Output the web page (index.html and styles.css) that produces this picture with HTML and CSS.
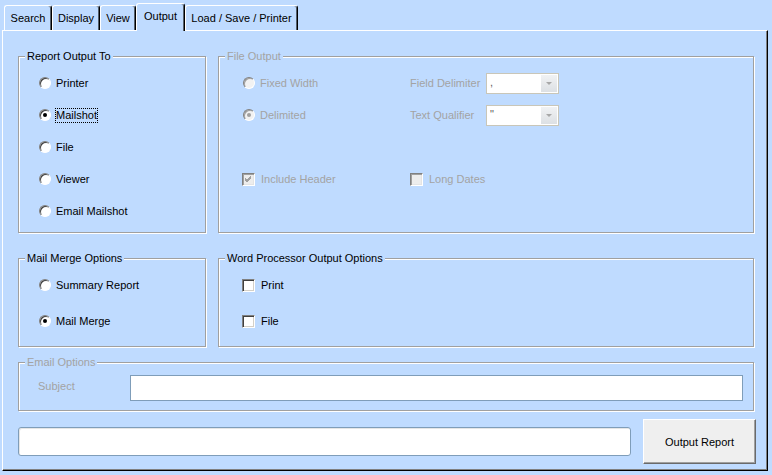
FILE: index.html
```html
<!DOCTYPE html>
<html>
<head>
<meta charset="utf-8">
<link rel="stylesheet" href="styles.css">
</head>
<body>
<div class="tabs">
  <div class="tab t-search">Search</div>
  <div class="tab t-display">Display</div>
  <div class="tab t-view">View</div>
  <div class="tab t-output active">Output</div>
  <div class="tab t-load">Load / Save / Printer</div>
</div>
<div class="panel">
  <div class="row row1">
    <fieldset class="group narrow">
      <legend>Report Output To</legend>
      <div class="opts report">
        <div class="opt"><span class="radio"></span><span class="lbl">Printer</span></div>
        <div class="opt"><span class="radio on"></span><span class="lbl focus">Mailshot</span></div>
        <div class="opt"><span class="radio"></span><span class="lbl">File</span></div>
        <div class="opt"><span class="radio"></span><span class="lbl">Viewer</span></div>
        <div class="opt"><span class="radio"></span><span class="lbl">Email Mailshot</span></div>
      </div>
    </fieldset>
    <fieldset class="group wide disabled">
      <legend>File Output</legend>
      <div class="fgrid">
        <div class="opt"><span class="radio dis"></span><span class="lbl">Fixed Width</span></div>
        <div class="opt"><span class="flabel">Field Delimiter</span><div class="combo"><span class="val">,</span><span class="cbtn"><span class="arrow"></span></span></div></div>
        <div class="opt"><span class="radio dis on"></span><span class="lbl">Delimited</span></div>
        <div class="opt"><span class="flabel">Text Qualifier</span><div class="combo"><span class="val">"</span><span class="cbtn"><span class="arrow"></span></span></div></div>
        <div class="opt"></div>
        <div class="opt"></div>
        <div class="opt"><span class="check dis shift"><svg width="11" height="11" viewBox="0 0 11 11"><path d="M2 5 L4 7 L8 3 M2 6 L4 8 L8 4 M2 4 L4 6 L8 2" stroke="#A0A0A0" stroke-width="1" fill="none"/></svg></span><span class="lbl">Include Header</span></div>
        <div class="opt"><span class="check dis"></span><span class="lbl">Long Dates</span></div>
      </div>
    </fieldset>
  </div>
  <div class="row row2">
    <fieldset class="group narrow">
      <legend>Mail Merge Options</legend>
      <div class="opts tall mm">
        <div class="opt"><span class="radio"></span><span class="lbl">Summary Report</span></div>
        <div class="opt"><span class="radio on"></span><span class="lbl">Mail Merge</span></div>
      </div>
    </fieldset>
    <fieldset class="group wide">
      <legend>Word Processor Output Options</legend>
      <div class="opts tall wp">
        <div class="opt"><span class="check"></span><span class="lbl">Print</span></div>
        <div class="opt"><span class="check"></span><span class="lbl">File</span></div>
      </div>
    </fieldset>
  </div>
  <div class="row row3">
    <fieldset class="group full disabled">
      <legend>Email Options</legend>
      <div class="subject-row">
        <span class="sublabel">Subject</span>
        <div class="input"></div>
      </div>
    </fieldset>
  </div>
  <div class="row row4">
    <div class="status"></div>
    <button class="go">Output Report</button>
  </div>
</div>
</body>
</html>
```
FILE: styles.css
```css
html, body {
  margin: 0;
  padding: 0;
}
body {
  background: #BFDBFF;
  font-family: "Liberation Sans", Arial, sans-serif;
  font-size: 11px;
  line-height: 13px;
  color: #000;
  width: 772px;
  height: 475px;
  overflow: hidden;
}

/* Tabs */
.tabs {
  display: flex;
  align-items: flex-end;
  height: 30px;
  padding-left: 4px;
  box-sizing: border-box;
}
.tab {
  box-sizing: border-box;
  height: 25px;
  border-top: 1px solid #fff;
  border-left: 1px solid #fff;
  border-right: 1px solid #000;
  box-shadow: inset -1px 0 0 #55606c;
  border-radius: 3px 3px 0 0;
  padding-top: 6px;
  text-align: center;
  background: #BFDBFF;
  white-space: nowrap;
}
.t-search { width: 48px; }
.t-display { width: 48px; }
.t-view { width: 36px; }
.t-output { width: 49px; }
.t-load { width: 113px; }
.tab.active {
  height: 28px;
  margin-bottom: -1px;
  position: relative;
  z-index: 1;
}

/* Panel */
.panel {
  box-sizing: border-box;
  margin-left: 2px;
  width: 766px;
  height: 441px;
  border-top: 1px solid #fff;
  border-left: 1px solid #fff;
  border-right: 1px solid #000;
  border-bottom: 1px solid #000;
  box-shadow: inset -1px -1px 0 #808080;
  padding: 19px 11px 0 15px;
  display: flex;
  flex-direction: column;
}
.row {
  display: flex;
  gap: 12px;
}
.row1 { height: 183px; }
.row2 { height: 95px; margin-top: 19px; }
.row3 { height: 55px; margin-top: 9px; }
.row4 { height: 45px; margin-top: 8px; align-items: center; gap: 0; }

fieldset.group {
  margin: 0;
  padding: 0;
  border: 1px solid #A0A0A0;
  box-shadow: inset 1px 1px 0 #fff, 1px 1px 0 #fff;
  box-sizing: border-box;
  min-width: 0;
}
.narrow { width: 188px; }
.wide { width: 536px; }
.full { width: 736px; }

legend {
  margin-left: 6px;
  padding: 0 2px;
  background: #BFDBFF;
  line-height: 13px;
}
.disabled legend,
.disabled .lbl,
.flabel,
.sublabel {
  color: #A3A3A3;
}

/* Option rows */
.opts {
  display: flex;
  flex-direction: column;
}
.opts.report {
  padding: 4px 0 0 20px;
}
.opt {
  height: 32px;
  display: flex;
  align-items: center;
}
.opts.tall {
  padding-top: 2px;
}
.opts.tall .opt {
  height: 36px;
}
.opts.mm { padding-left: 20px; }
.opts.wp { padding-left: 23px; }
.lbl {
  margin-left: 5px;
  white-space: nowrap;
}
.check + .lbl { margin-left: 6px; }
.focus {
  outline: 1px dotted #000;
}

/* Radio */
.radio {
  width: 12px;
  height: 12px;
  box-sizing: border-box;
  border-radius: 50%;
  border: 1px solid;
  border-color: #808080 #fff #fff #808080;
  background: #fff;
  box-shadow: inset 1px 1px 0 #404040;
  flex: none;
  position: relative;
}
.radio.on::after {
  content: "";
  position: absolute;
  left: 3px;
  top: 3px;
  width: 4px;
  height: 4px;
  border-radius: 50%;
  background: #000;
}
.radio.dis {
  background: #F2F2F2;
  box-shadow: inset 1px 1px 0 #A0A0A0;
}
.radio.dis.on::after {
  background: #A0A0A0;
}

/* Checkbox */
.check {
  width: 13px;
  height: 13px;
  box-sizing: border-box;
  border: 1px solid;
  border-color: #808080 #fff #fff #808080;
  box-shadow: inset 1px 1px 0 #404040, inset -1px -1px 0 #D4D0C8;
  background: #fff;
  flex: none;
  display: flex;
}
.check svg { display: block; margin: 0; }
.check.dis {
  background: #EDEDED;
  box-shadow: inset 1px 1px 0 #A0A0A0, inset -1px -1px 0 #E4E4E4;
}
.check.shift { margin-left: -1px; }

/* File output grid */
.fgrid {
  display: grid;
  grid-template-columns: 167px 1fr;
  grid-auto-rows: 32px;
  padding: 4px 0 0 24px;
}
.flabel {
  width: 76px;
  flex: none;
  white-space: nowrap;
}
.combo {
  display: flex;
  width: 73px;
  height: 21px;
  box-sizing: border-box;
  border: 1px solid #C9C6B8;
  background: #fff;
}
.combo .val {
  flex: 1;
  padding-left: 3px;
  color: #606060;
  line-height: 17px;
}
.cbtn {
  width: 16px;
  margin: 1px 1px 1px 0;
  background: linear-gradient(#F0F2F4, #E8EAEC 45%, #DCE0E4);
  display: flex;
  align-items: center;
  justify-content: center;
}
.arrow {
  width: 0;
  height: 0;
  border-left: 3px solid transparent;
  border-right: 3px solid transparent;
  border-top: 3px solid #A8A8A8;
}

/* Email */
.subject-row {
  display: flex;
  align-items: center;
  padding-top: 6px;
}
.sublabel {
  width: 92px;
  padding-left: 19px;
  padding-bottom: 4px;
  flex: none;
}
.input {
  flex: 1;
  height: 26px;
  box-sizing: border-box;
  border: 1px solid #7F9DB9;
  background: #fff;
  margin-right: 10px;
}

/* Bottom */
.status {
  width: 613px;
  height: 29px;
  box-sizing: border-box;
  border: 1px solid #7F9DB9;
  border-radius: 3px;
  background: #fff;
  box-shadow: inset 1px 1px 0 #E6E6E6;
}
.go {
  margin-left: auto;
  width: 113px;
  height: 45px;
  box-sizing: border-box;
  background: #EFEFEF;
  border: 1px solid;
  border-color: #fff #6A6A6A #6A6A6A #fff;
  box-shadow: inset -1px -1px 0 #A0A0A0;
  font-family: inherit;
  font-size: 11px;
  color: #000;
  padding: 0;
}
```
